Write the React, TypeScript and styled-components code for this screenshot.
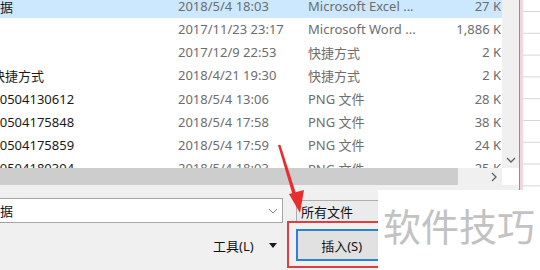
import styled, { createGlobalStyle } from 'styled-components';

const GlobalStyle = createGlobalStyle`
  html, body {
    margin: 0;
    padding: 0;
    background: #ffffff;
  }
  body {
    font-family: "Noto Sans", "Noto Sans CJK SC", sans-serif;
  }
`;

const Screen = styled.div`
  position: relative;
  width: 540px;
  height: 270px;
  overflow: hidden;
  display: flex;
  background: #ffffff;
`;

const Dialog = styled.div`
  width: 519px;
  flex-shrink: 0;
  display: flex;
  flex-direction: column;
  background: #f0f0f0;
  border-right: 1px solid #6e9ea3;
`;

const ListPane = styled.div`
  display: flex;
  height: 168px;
  background: #ffffff;
`;

const FileList = styled.div`
  width: 502px;
  overflow: hidden;
`;

const Rows = styled.div`
  margin-top: -5.5px;
`;

const Row = styled.div<{ $selected?: boolean }>`
  display: grid;
  grid-template-columns: 178px 130px 110px 83px;
  align-items: center;
  height: 23.15px;
  font-size: 13px;
  white-space: nowrap;
  background: ${p => (p.$selected ? '#cce8ff' : 'transparent')};
`;

const NameCell = styled.div<{ $shift: number }>`
  overflow: hidden;
  color: #1a1a1a;
  text-indent: ${p => p.$shift}px;
`;

const InfoCell = styled.div<{ $right?: boolean }>`
  overflow: hidden;
  color: #6d6d6d;
  text-align: ${p => (p.$right ? 'right' : 'left')};
`;

const VScroll = styled.div`
  width: 17px;
  display: flex;
  flex-direction: column;
  justify-content: flex-end;
  align-items: center;
  background: #f0f0f0;
`;

const ScrollArrow = styled.div`
  width: 17px;
  height: 17px;
  display: flex;
  align-items: center;
  justify-content: center;
`;

const HScrollRow = styled.div`
  display: flex;
  height: 17px;
`;

const HTrack = styled.div`
  width: 502px;
  display: flex;
  background: #f0f0f0;
`;

const HThumb = styled.div`
  width: 458px;
  background: #cdcdcd;
`;

const TrackGap = styled.div`
  flex: 1;
`;

const Corner = styled.div`
  flex: 1;
  background: #ffffff;
`;

const Footer = styled.div`
  flex: 1;
  display: flex;
  flex-direction: column;
  gap: 6px;
  padding-top: 13px;
`;

const FileRow = styled.div`
  display: flex;
  align-items: flex-start;
  height: 25px;
`;

const NameInput = styled.div`
  box-sizing: border-box;
  width: 283px;
  height: 25px;
  display: flex;
  align-items: center;
  justify-content: space-between;
  padding-right: 4px;
  background: #ffffff;
  border: 1px solid #a5a5a5;
  border-left: none;
  font-size: 13px;
  color: #111111;
`;

const InputText = styled.span<{ $shift: number }>`
  overflow: hidden;
  white-space: nowrap;
  text-indent: ${p => p.$shift}px;
`;

const TypeSelect = styled.div`
  box-sizing: border-box;
  width: 200px;
  height: 23px;
  margin: 2px 0 0 13px;
  padding-left: 4px;
  display: flex;
  align-items: center;
  background: #ebebeb;
  border: 1px solid #adadad;
  font-size: 13px;
  color: #111111;
`;

const ButtonRow = styled.div`
  display: flex;
  align-items: center;
  height: 32px;
  padding-left: 213px;
`;

const ToolsLabel = styled.span`
  font-size: 13px;
  color: #111111;
`;

const Caret = styled.svg`
  margin-left: 15px;
`;

const InsertButton = styled.div`
  box-sizing: border-box;
  width: 92px;
  height: 32px;
  margin-left: 19px;
  display: flex;
  align-items: center;
  justify-content: center;
  background: #e1e1e1;
  border: 2px solid #2f7fd2;
  font-size: 13px;
  color: #111111;
`;

const Sheet = styled.div`
  flex: 1;
  border-left: 3px solid #f2d6dc;
  background-color: #ffffff;
  background-image: linear-gradient(to bottom, #d6d6d6 1px, transparent 1px);
  background-size: 100% 21.8px;
  background-position: 0 11px;
`;

const Highlight = styled.div`
  position: absolute;
  left: 287px;
  top: 221px;
  width: 130px;
  height: 47px;
  box-sizing: border-box;
  border: 2px solid #e23d3d;
`;

const ArrowLayer = styled.svg`
  position: absolute;
  left: 0;
  top: 0;
  pointer-events: none;
`;

const Watermark = styled.div`
  position: absolute;
  left: 378px;
  top: 190px;
  width: 162px;
  height: 80px;
  box-sizing: border-box;
  padding: 0 0 12px 5px;
  display: flex;
  align-items: center;
  background: #ffffff;
  font-family: "Noto Sans CJK SC", sans-serif;
  font-size: 38px;
  color: #c2c2c2;
  white-space: nowrap;
`;

interface FileEntry {
  name: string;
  shift: number;
  date: string;
  kind: string;
  size: string;
  selected?: boolean;
}

const files: FileEntry[] = [
  { name: '数据', shift: -13, date: '2018/5/4 18:03', kind: 'Microsoft Excel ...', size: '27 K', selected: true },
  { name: '', shift: 0, date: '2017/11/23 23:17', kind: 'Microsoft Word ...', size: '1,886 K' },
  { name: '', shift: 0, date: '2017/12/9 22:53', kind: '快捷方式', size: '2 K' },
  { name: '快捷方式', shift: -8, date: '2018/4/21 19:30', kind: '快捷方式', size: '2 K' },
  { name: '20180504130612', shift: -30, date: '2018/5/4 13:06', kind: 'PNG 文件', size: '28 K' },
  { name: '20180504175848', shift: -30, date: '2018/5/4 17:58', kind: 'PNG 文件', size: '38 K' },
  { name: '20180504175859', shift: -30, date: '2018/5/4 17:59', kind: 'PNG 文件', size: '24 K' },
  { name: '20180504180394', shift: -30, date: '2018/5/4 18:03', kind: 'PNG 文件', size: '25 K' },
];

const App = () => {
  return (
    <Screen>
      <GlobalStyle />
      <Dialog>
        <ListPane>
          <FileList>
            <Rows>
              {files.map((f, i) => (
                <Row key={i} $selected={f.selected}>
                  <NameCell $shift={f.shift}>{f.name}</NameCell>
                  <InfoCell>{f.date}</InfoCell>
                  <InfoCell>{f.kind}</InfoCell>
                  <InfoCell $right>{f.size}</InfoCell>
                </Row>
              ))}
            </Rows>
          </FileList>
          <VScroll>
            <ScrollArrow>
              <svg width="10" height="6" viewBox="0 0 10 6">
                <path d="M1 1 L5 5 L9 1" fill="none" stroke="#606060" strokeWidth="1.3" />
              </svg>
            </ScrollArrow>
          </VScroll>
        </ListPane>
        <HScrollRow>
          <HTrack>
            <HThumb />
            <TrackGap />
            <ScrollArrow>
              <svg width="6" height="10" viewBox="0 0 6 10">
                <path d="M1 1 L5 5 L1 9" fill="none" stroke="#606060" strokeWidth="1.3" />
              </svg>
            </ScrollArrow>
          </HTrack>
          <Corner />
        </HScrollRow>
        <Footer>
          <FileRow>
            <NameInput>
              <InputText $shift={-13}>数据</InputText>
              <svg width="10" height="6" viewBox="0 0 10 6">
                <path d="M1 1 L5 5 L9 1" fill="none" stroke="#8a8a8a" strokeWidth="1" />
              </svg>
            </NameInput>
            <TypeSelect>所有文件</TypeSelect>
          </FileRow>
          <ButtonRow>
            <ToolsLabel>工具(L)</ToolsLabel>
            <Caret width="8" height="5" viewBox="0 0 8 5">
              <path d="M0 0 L8 0 L4 5 Z" fill="#1a1a1a" />
            </Caret>
            <InsertButton>插入(S)</InsertButton>
          </ButtonRow>
        </Footer>
      </Dialog>
      <Sheet />
      <Highlight />
      <ArrowLayer width="540" height="270" viewBox="0 0 540 270">
        <path d="M278 145 L280.5 145 L296.5 195 L293 196 Z" fill="#e62e2e" />
        <path d="M289 194 L304 190 L300 213 Z" fill="#e62e2e" />
      </ArrowLayer>
      <Watermark>软件技巧</Watermark>
    </Screen>
  );
};

export default App;
